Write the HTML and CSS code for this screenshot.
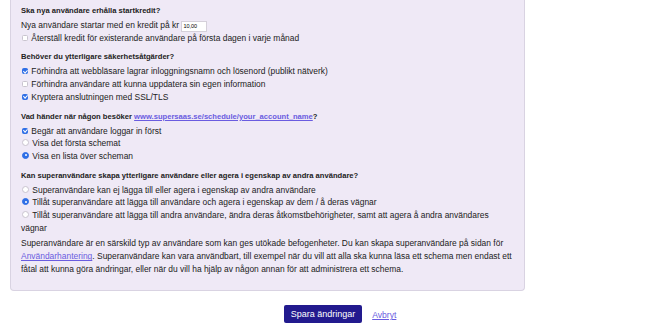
FILE: index.html
```html
<!DOCTYPE html>
<html lang="sv">
<head>
  <meta charset="UTF-8" />
  <meta name="viewport" content="width=device-width, initial-scale=1.0"/>
  <title>Inställningar</title>
  <link rel="stylesheet" href="styles.css">
</head>
<body>
  <form class="panel">
    <div class="group">
      <div class="question">Ska nya användare erhålla startkredit?</div>
      <div class="line">Nya användare startar med en kredit på kr <input class="amount" type="text" value="10,00" /></div>
      <label class="line"><input type="checkbox" /> Återställ kredit för existerande användare på första dagen i varje månad</label>
    </div>
    <div class="group">
      <div class="question">Behöver du ytterligare säkerhetsåtgärder?</div>
      <label class="line"><input type="checkbox" checked /> Förhindra att webbläsare lagrar inloggningsnamn och lösenord (publikt nätverk)</label>
      <label class="line"><input type="checkbox" /> Förhindra användare att kunna uppdatera sin egen information</label>
      <label class="line"><input type="checkbox" checked /> Kryptera anslutningen med SSL/TLS</label>
    </div>
    <div class="group">
      <div class="question">Vad händer när någon besöker <a href="#">www.supersaas.se/schedule/your_account_name</a>?</div>
      <label class="line"><input type="checkbox" checked /> Begär att användare loggar in först</label>
      <label class="line"><input type="radio" name="visit" /> Visa det första schemat</label>
      <label class="line"><input type="radio" name="visit" checked /> Visa en lista över scheman</label>
    </div>
    <div class="group">
      <div class="question">Kan superanvändare skapa ytterligare användare eller agera i egenskap av andra användare?</div>
      <label class="line"><input type="radio" name="super" /> Superanvändare kan ej lägga till eller agera i egenskap av andra användare</label>
      <label class="line"><input type="radio" name="super" checked /> Tillåt superanvändare att lägga till användare och agera i egenskap av dem / å deras vägnar</label>
      <label class="line"><input type="radio" name="super" /> Tillåt superanvändare att lägga till andra användare, ändra deras åtkomstbehörigheter, samt att agera å andra användares vägnar</label>
      <p class="note">Superanvändare är en särskild typ av användare som kan ges utökade befogenheter. Du kan skapa superanvändare på sidan för <a href="#">Användarhantering</a>. Superanvändare kan vara användbart, till exempel när du vill att alla ska kunna läsa ett schema men endast ett fåtal att kunna göra ändringar, eller när du vill ha hjälp av någon annan för att administrera ett schema.</p>
    </div>
  </form>
  <div class="actions">
    <button type="submit">Spara ändringar</button>
    <a href="#">Avbryt</a>
  </div>
</body>
</html>
```
FILE: styles.css
```css
body {
  margin: 0;
  font-family: "Liberation Sans", Arial, sans-serif;
  font-size: 8.45px;
  color: #222;
  background-color: #fff;
}
a {
  color: #6a5ce0;
}
.panel {
  width: 494px;
  margin-left: 10px;
  padding: 4px 9px 14px 10px;
  background-color: #efe9f6;
  border: 1px solid #d9d3e2;
  border-top: none;
  border-radius: 0 0 4px 4px;
}
.group {
  margin-bottom: 6px;
}
.group:last-child {
  margin-bottom: 0;
}
.question {
  font-weight: bold;
  font-size: 7.6px;
  line-height: 13px;
  margin-bottom: 2px;
}
.line {
  display: block;
  line-height: 12.7px;
}
.line input[type="checkbox"],
.line input[type="radio"] {
  appearance: none;
  box-sizing: border-box;
  width: 6px;
  height: 6px;
  margin: 0 1px 0 1px;
  vertical-align: 0;
  background-color: #fff;
  border: 1px solid #c9c4cf;
  border-radius: 1.5px;
  position: relative;
}
.line input[type="radio"] {
  width: 7px;
  height: 7px;
  border-radius: 50%;
}
.line input[type="checkbox"]:checked {
  background-color: #2f6fe6;
  border-color: #2f6fe6;
}
.line input[type="checkbox"]:checked::after {
  content: "";
  position: absolute;
  left: 1px;
  top: -0.5px;
  width: 1.5px;
  height: 3px;
  border: solid #fff;
  border-width: 0 1px 1px 0;
  transform: rotate(45deg);
}
.line input[type="radio"]:checked {
  background-color: #2f6fe6;
  border-color: #2f6fe6;
}
.line input[type="radio"]:checked::after {
  content: "";
  position: absolute;
  left: 1.5px;
  top: 1.5px;
  width: 2px;
  height: 2px;
  border-radius: 50%;
  background-color: #fff;
}
.amount {
  width: 22px;
  height: 9px;
  padding: 0 1px;
  font-family: inherit;
  font-size: 5.5px;
  border: 1px solid #d5d0da;
  background-color: #fff;
  vertical-align: 0;
}
.note {
  margin: 3px 0 0;
  line-height: 13px;
}
.actions {
  display: flex;
  justify-content: center;
  align-items: center;
  gap: 10px;
  margin-top: 14px;
  padding-left: 9px;
}
button {
  height: 18px;
  padding: 0 7px;
  font-family: inherit;
  font-size: 9px;
  color: #fff;
  background-color: #221a8e;
  border: none;
  border-radius: 2px;
}
.actions a {
  font-size: 8.6px;
  margin-top: 1px;
}
```
